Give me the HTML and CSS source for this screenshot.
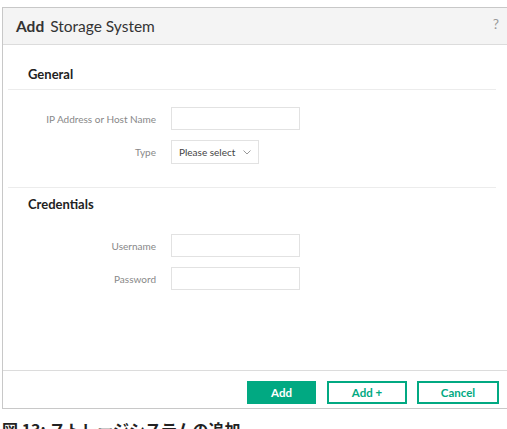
FILE: index.html
```html
<!DOCTYPE html>
<html lang="ja">
  <head>
    <meta charset="UTF-8" />
    <title>Add Storage System</title>
    <link rel="stylesheet" href="styles.css">
  </head>
  <body>
    <div class="dialog">
      <header class="dialog-header">
        <h1><b>Add</b> Storage System</h1>
        <span class="help">?</span>
      </header>
      <div class="dialog-body">
        <section class="section">
          <h2>General</h2>
          <div class="fields">
            <label for="host">IP Address or Host Name</label>
            <input id="host" type="text" class="text-input" />
            <label for="type">Type</label>
            <div class="select" id="type">
              <span>Please select</span>
              <svg width="8" height="5" viewBox="0 0 8 5"><path d="M0.5 0.5 L4 4 L7.5 0.5" fill="none" stroke="#999" stroke-width="1"/></svg>
            </div>
          </div>
        </section>
        <section class="section">
          <h2>Credentials</h2>
          <div class="fields">
            <label for="user">Username</label>
            <input id="user" type="text" class="text-input" />
            <label for="pass">Password</label>
            <input id="pass" type="password" class="text-input" />
          </div>
        </section>
      </div>
      <footer class="dialog-footer">
        <button class="btn primary">Add</button>
        <button class="btn">Add +</button>
        <button class="btn">Cancel</button>
      </footer>
    </div>
    <p class="caption">図 13: ストレージシステムの追加</p>
  </body>
</html>
```

FILE: styles.css
```css
*,
*::before,
*::after {
  box-sizing: border-box;
}

body {
  margin: 0;
  padding: 7px 0 0 2px;
  overflow: hidden;
  background: #fff;
  font-family: Lato, "Open Sans", sans-serif;
  color: #333;
}

.dialog {
  width: 510px;
  border: 1px solid #c8c8c8;
  border-right: none;
}

.dialog-header {
  display: flex;
  align-items: center;
  justify-content: space-between;
  height: 37px;
  padding: 0 0 0 13px;
  background: #f4f4f4;
  border-bottom: 1px solid #dcdcdc;
}

.dialog-header h1 {
  margin: 0;
  font-size: 15.5px;
  font-weight: normal;
  color: #333;
}

.dialog-header b {
  font-weight: bold;
  margin-right: 2px;
}

.help {
  margin-right: 13px;
  margin-top: -6px;
  font-size: 14px;
  color: #999;
}

.dialog-body {
  height: 325px;
  padding: 0 20px 0 5px;
}

.section {
  width: 488px;
}

.section + .section {
  border-top: 1px solid #ececec;
}

.section h2 {
  margin: 0;
  padding: 21px 0 0 20px;
  height: 45px;
  font-size: 13px;
  font-weight: bold;
  color: #222;
  border-bottom: 1px solid #ececec;
}

.section + .section h2 {
  border-bottom: none;
  height: 41px;
  padding-top: 8px;
}

.fields {
  display: grid;
  grid-template-columns: 148px 130px;
  column-gap: 15px;
  row-gap: 10px;
  align-items: center;
  padding: 17px 0 23px;
}

.section + .section .fields {
  padding-top: 5px;
}

.fields label {
  font-size: 10px;
  color: #888;
  text-align: right;
}

.text-input {
  width: 129px;
  height: 23px;
  border: 1px solid #e2e2e2;
  border-radius: 0;
  margin: 0;
  padding: 0 6px;
  outline: none;
}

.select {
  display: flex;
  align-items: center;
  justify-content: space-between;
  width: 88px;
  height: 24px;
  padding: 0 7px;
  border: 1px solid #e2e2e2;
  font-size: 10px;
  color: #444;
}

.dialog-footer {
  display: flex;
  justify-content: flex-end;
  gap: 10px;
  padding: 10px 11px 4px 0;
  border-top: 1px solid #dcdcdc;
  width: 507px;
}

.btn {
  all: unset;
  box-sizing: border-box;
  width: 80px;
  height: 23px;
  text-align: center;
  font-size: 11.5px;
  font-weight: bold;
  color: #01a982;
  border: 2px solid #01a982;
  background: #fff;
  cursor: pointer;
}

.btn.primary {
  width: 69px;
  margin-right: 1px;
  background: #01a982;
  color: #fff;
}

.btn:last-child {
  width: 82px;
}

.caption {
  margin: 8px 0 0 0;
  font-family: "Noto Sans CJK JP", sans-serif;
  font-size: 16px;
  font-weight: bold;
  color: #222;
  white-space: nowrap;
}
```
